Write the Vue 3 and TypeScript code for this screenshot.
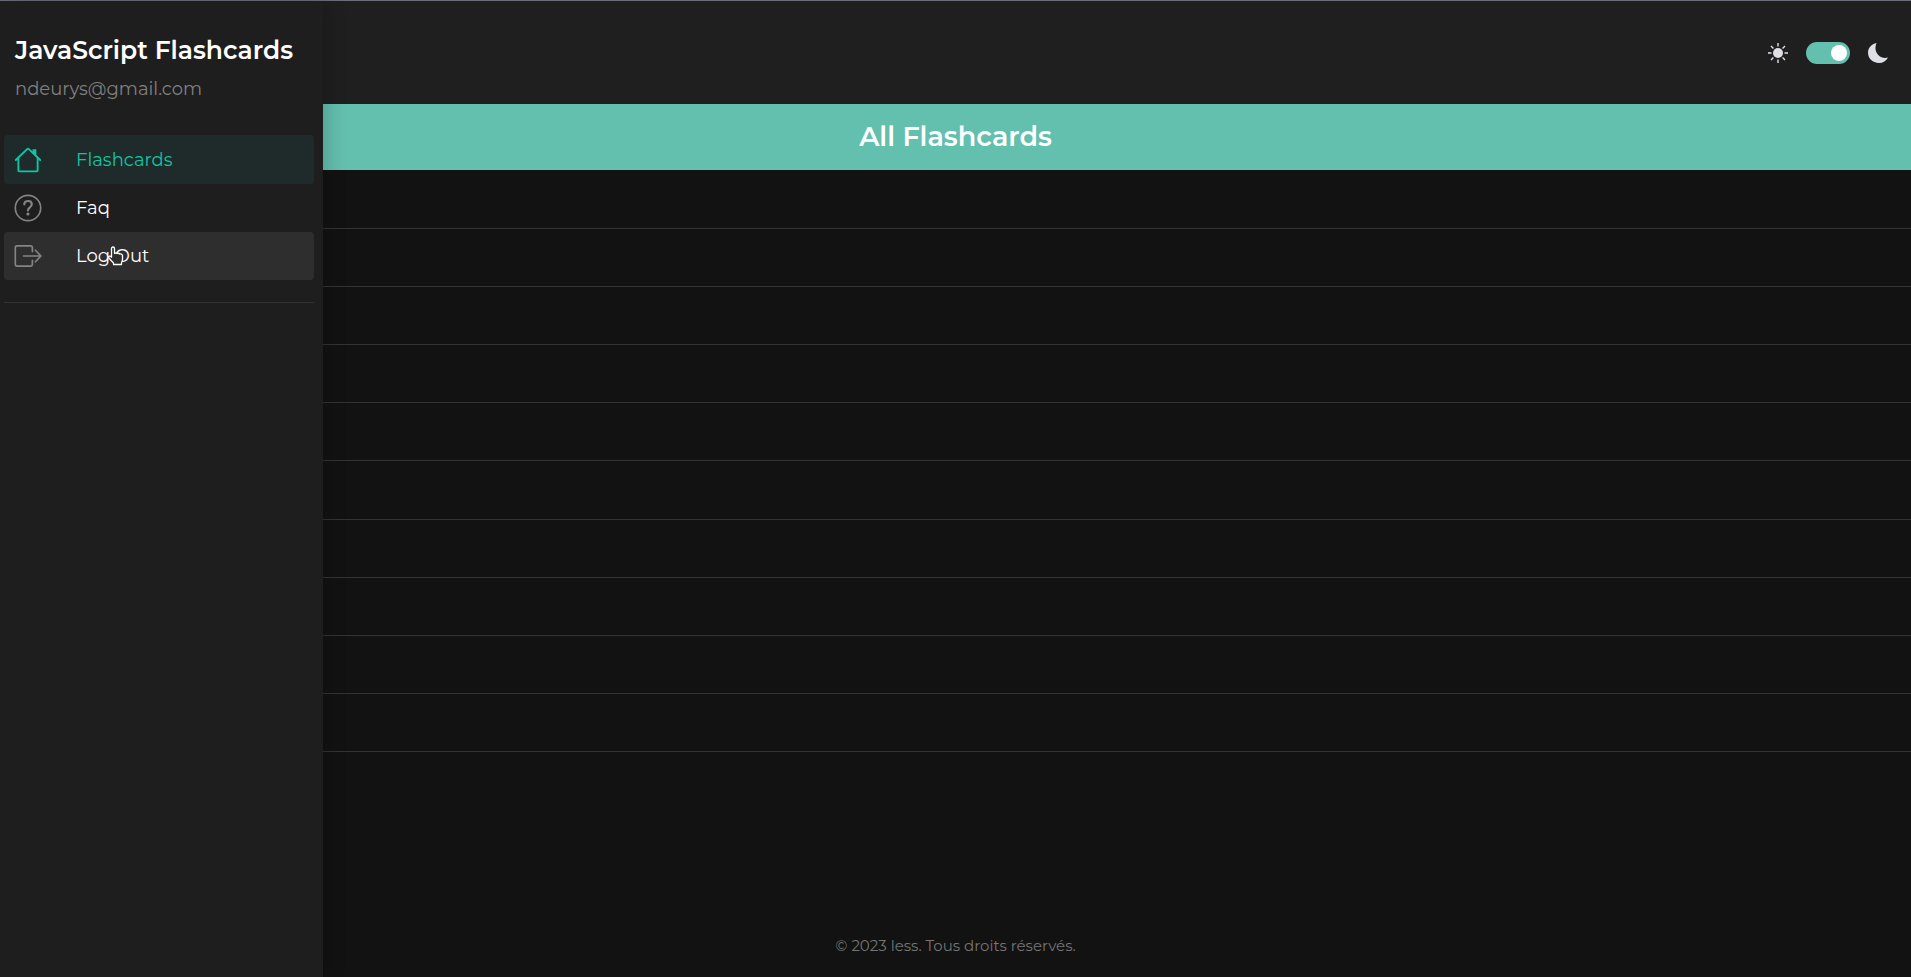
<script setup lang="ts">
import { ref } from 'vue'

const appTitle = 'JavaScript Flashcards'
const email = 'ndeurys@gmail.com'
const dark = ref<boolean>(true)
const rows: number[] = Array.from({ length: 10 }, (_, i) => i)
</script>

<template>
  <div class="app">
    <aside class="menu">
      <header class="menu-head">
        <h1>{{ appTitle }}</h1>
        <p>{{ email }}</p>
      </header>
      <nav>
        <a href="#flashcards" class="entry active">
          <svg class="icon" viewBox="0 0 512 512" aria-hidden="true">
            <path d="M80 212v236a16 16 0 0 0 16 16h320a16 16 0 0 0 16-16V212" />
            <path d="M480 256 266.900 52c-5-5.300-16.700-5.300-21.800 0L32 256" />
            <path class="solid" d="M346 64h58v120l-58-54z" />
          </svg>
          <span>Flashcards</span>
        </a>
        <a href="#faq" class="entry">
          <svg class="icon" viewBox="0 0 512 512" aria-hidden="true">
            <circle cx="256" cy="256" r="232" />
            <path class="thick" d="M188 190c2-42 34-62 71-62 38 0 66 22 66 58 0 32-20 47-39 61-21 15-31 27-31 53" />
            <circle class="solid" cx="255" cy="366" r="14" />
          </svg>
          <span>Faq</span>
        </a>
        <a href="#logout" class="entry hovered">
          <svg class="icon" viewBox="0 0 512 512" aria-hidden="true">
            <path d="M336 176v-72a32 32 0 0 0-32-32H56a32 32 0 0 0-32 32v304a32 32 0 0 0 32 32h248a32 32 0 0 0 32-32v-72" />
            <path d="M392 150l100 106-100 106M172 256h316" />
          </svg>
          <span>Log Out</span>
          <svg class="pointer" viewBox="0 0 18 20" aria-hidden="true">
            <path d="M4.500 2.500a1.500 1.500 0 0 1 3 0V7.500q1.500-1 2.800 0q1.500-.7 2.600.5q1.800-.4 2.600 1.200V13q0 2.200-1 3.600v1.900H6.500v-1.500L2 12.300q-1-1.600.3-2.200q1-.3 2.200 1.100z" />
          </svg>
        </a>
      </nav>
    </aside>

    <div class="page">
      <header class="toolbar">
        <svg class="sun" viewBox="0 0 20 20" aria-hidden="true">
          <circle cx="10" cy="10" r="5" />
          <path d="M10 0v3.500M10 16.500V20M0 10h3.500M16.500 10H20M3 3l2.400 2.400M14.600 14.600 17 17M3 17l2.400-2.400M14.600 5.400 17 3" />
        </svg>
        <input v-model="dark" class="switch" type="checkbox" role="switch" aria-label="Dark mode" />
        <svg class="moon" viewBox="0 0 20 20" aria-hidden="true">
          <path d="M8.500 0C6.500 5 7.600 9.500 10.500 12.200C13 14.600 16.500 15.600 20 14.500C18.300 18 15 20 11 20C4.800 20 0 15.600 0 9.600C0 5 3.500 1.200 8.500 0z" />
        </svg>
      </header>
      <h2 class="banner">All Flashcards</h2>
      <ul class="cards">
        <li v-for="row in rows" :key="row"></li>
      </ul>
      <footer>© 2023 less. Tous droits réservés.</footer>
    </div>
  </div>
</template>

<style>
body {
  background: #121212;
}
</style>

<style scoped>
.app {
  position: relative;
  min-height: 100vh;
  box-sizing: border-box;
  border-top: 1px solid #6b6d7a;
  background: #121212;
  color: #fff;
  font-family: Montserrat, Inter, sans-serif;
  display: flex;
}
.menu {
  position: absolute;
  top: 0;
  bottom: 0;
  left: 0;
  z-index: 2;
  width: 323px;
  box-sizing: border-box;
  padding: 33px 9px 0 4px;
  background: #1e1e1e;
  box-shadow: 4px 0 18px rgba(0, 0, 0, 0.18);
}
.menu-head {
  padding: 0 11px;
  height: 101px;
}
h1 {
  margin: 0;
  font-size: 25px;
  line-height: 32px;
  font-weight: 600;
  white-space: nowrap;
}
.menu-head p {
  margin: 11px 0 0;
  font-size: 18px;
  line-height: 24px;
  color: #808080;
}
nav {
  display: grid;
  grid-template-rows: 49px 48px 48px;
  padding-bottom: 22px;
  border-bottom: 1px solid #333;
}
.entry {
  position: relative;
  display: flex;
  align-items: center;
  gap: 34px;
  padding: 0 10px;
  border-radius: 4px;
  color: #fff;
  font-size: 18px;
  text-decoration: none;
}
.active {
  background: #1e2b2a;
  color: #0fc5a5;
}
.hovered {
  background: #2e2e2e;
}
.icon {
  width: 28px;
  height: 28px;
  fill: none;
  stroke: #848484;
  stroke-width: 30;
  stroke-linejoin: round;
  stroke-linecap: round;
}
.active .icon {
  stroke: #0fc5a5;
  stroke-width: 34;
}
.icon .thick {
  stroke-width: 40;
}
.icon .solid {
  fill: #848484;
}
.active .icon .solid {
  fill: #0fc5a5;
  stroke-width: 8;
}
.pointer {
  position: absolute;
  left: 103px;
  top: 14px;
  width: 18px;
  height: 20px;
  fill: #2e2e2e;
  stroke: #fff;
  stroke-width: 1.3;
  stroke-linejoin: round;
}
.page {
  flex: 1;
  display: flex;
  flex-direction: column;
}
.toolbar {
  display: flex;
  align-items: center;
  justify-content: flex-end;
  height: 103px;
  padding-right: 23px;
  background: #1f1f1f;
}
.sun,
.moon {
  width: 20px;
  height: 20px;
  fill: #dfe0e6;
}
.sun path {
  stroke: #dfe0e6;
  stroke-width: 1.4;
}
.switch {
  appearance: none;
  width: 44px;
  height: 22px;
  margin: 0 18px;
  padding: 3px;
  display: flex;
  box-sizing: border-box;
  border-radius: 11px;
  background: #555;
}
.switch::before {
  content: '';
  width: 16px;
  height: 16px;
  border-radius: 50%;
  background: #fff;
}
.switch:checked {
  justify-content: flex-end;
  background: #63bfae;
}
.banner {
  margin: 0;
  background: #63bfae;
  font-size: 27px;
  line-height: 66px;
  font-weight: 600;
  text-align: center;
}
.cards {
  list-style: none;
  box-sizing: border-box;
  margin: 0;
  padding: 1px 0 0;
  height: 582px;
  display: grid;
  grid-auto-rows: 1fr;
}
.cards li {
  border-bottom: 1px solid #333;
}
footer {
  margin-top: auto;
  padding-bottom: 20px;
  font-size: 15px;
  line-height: 22px;
  color: #757575;
  text-align: center;
}
</style>
